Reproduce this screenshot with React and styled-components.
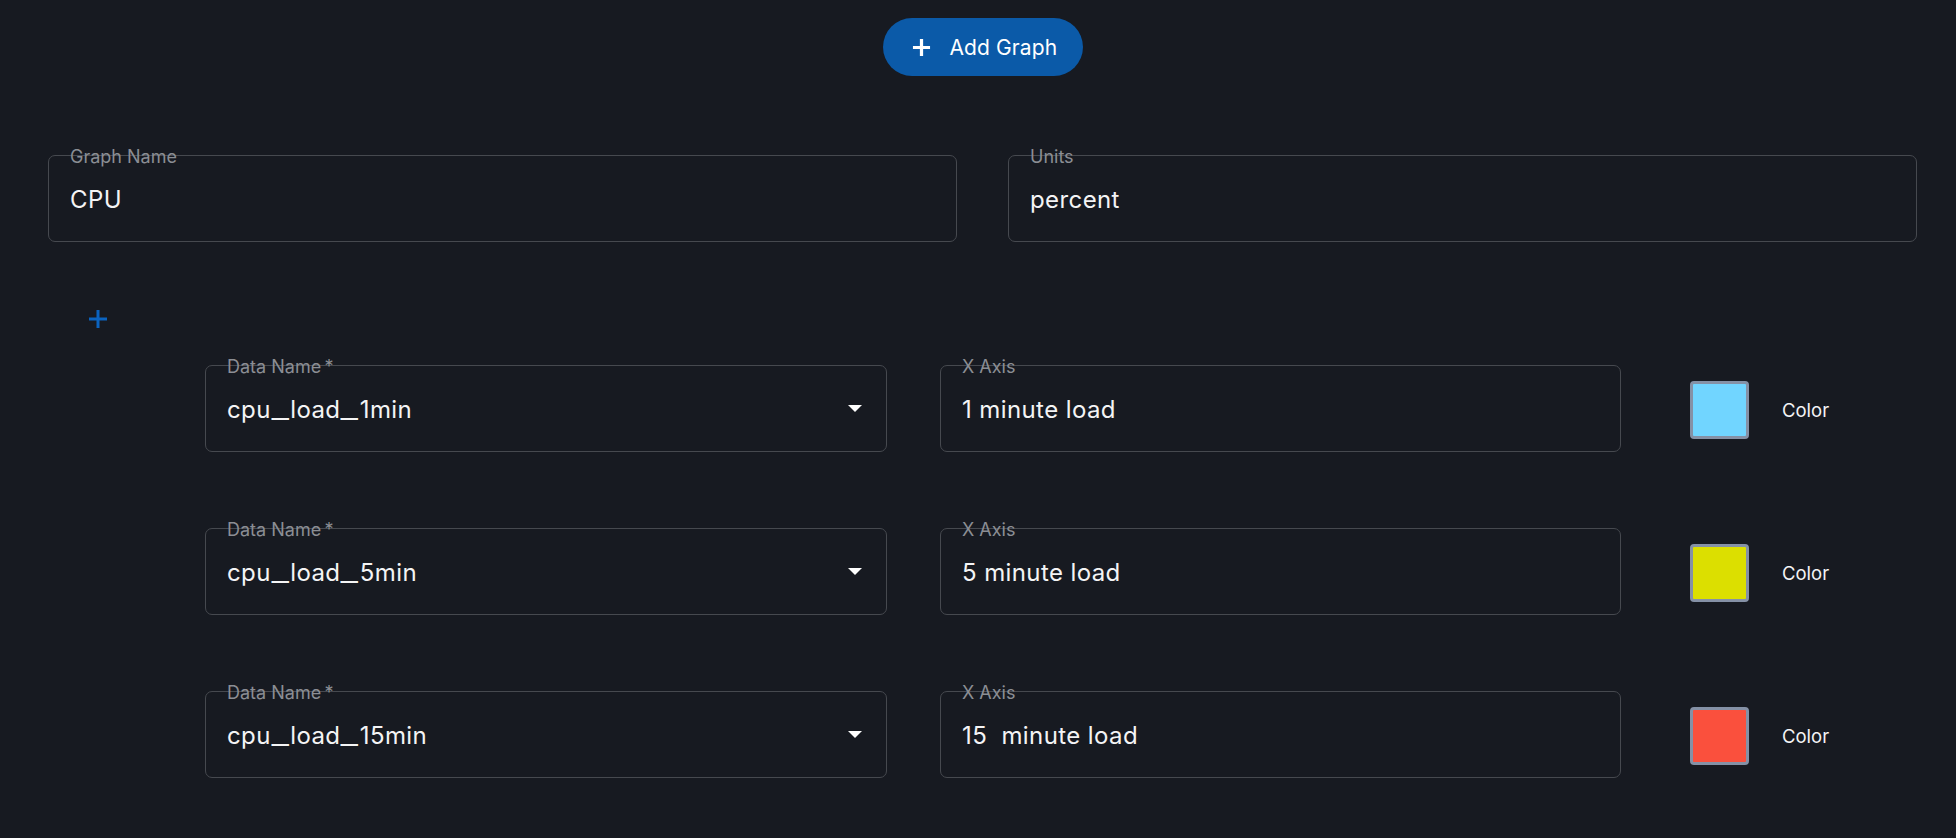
import React from "react";
import styled, { createGlobalStyle } from "styled-components";

const Global = createGlobalStyle`
  html, body { margin: 0; padding: 0; background: #171a21; }
  body { font-family: Inter, "Noto Sans", sans-serif; color: #fff; }
`;

const Page = styled.div`
  min-height: 838px;
  padding: 18px 39px 0 48px;
  box-sizing: border-box;
  display: flex;
  flex-direction: column;
`;

const TopBar = styled.div`
  display: flex;
  justify-content: center;
`;

const AddButton = styled.button`
  height: 58px;
  width: 200px;
  border: none;
  border-radius: 29px;
  background: #0b5aa8;
  color: #fff;
  font-family: Inter, sans-serif;
  font-size: 21px;
  font-weight: 400;
  letter-spacing: 0.1px;
  display: flex;
  align-items: center;
  justify-content: flex-start;
  gap: 19px;
  padding: 0 0 0 29px;
  cursor: pointer;
`;

const FieldsRow = styled.div`
  margin-top: 79px;
  display: grid;
  grid-template-columns: 1fr 1fr;
  gap: 51px;
`;

const Field = styled.div`
  position: relative;
  height: 87px;
  width: ${(p) => (p.$width ? `${p.$width}px` : "auto")};
  box-sizing: border-box;
  border: 1px solid #46494f;
  border-radius: 7px;
  display: flex;
  align-items: center;
  padding: 0 24px 0 21px;
  flex-shrink: 0;
`;

const Label = styled.span`
  position: absolute;
  left: 21px;
  top: -8px;
  font-size: 18px;
  line-height: 18px;
  color: #8b8e94;
`;

const Value = styled.span`
  flex: 1;
  font-size: 24px;
  letter-spacing: 0.4px;
  color: #f4f4f5;
  white-space: pre;
  padding-top: 2px;
`;

const Underscore = styled.span`
  display: inline-block;
  transform: scaleX(1.6);
  margin: 0 4px;
`;

const PlusRow = styled.div`
  margin-top: 67px;
  padding-left: 40px;
  height: 20px;
  display: flex;
  align-items: center;
`;

const IconButton = styled.button`
  background: none;
  border: none;
  padding: 0;
  width: 20px;
  height: 20px;
  display: flex;
  cursor: pointer;
`;

const Rows = styled.div`
  margin-top: 36px;
  padding-left: 157px;
  display: flex;
  flex-direction: column;
  gap: 76px;
`;

const Row = styled.div`
  display: flex;
  align-items: center;
`;

const Gap = styled.div`
  width: ${(p) => p.$w}px;
  flex-shrink: 0;
`;

const Swatch = styled.div`
  width: 59px;
  height: 58px;
  box-sizing: border-box;
  border: 3px solid #8591a6;
  border-radius: 4px;
  background: ${(p) => p.$color};
  margin-top: 3px;
  flex-shrink: 0;
`;

const ColorText = styled.span`
  font-size: 18.5px;
  color: #f4f4f5;
  margin-left: 33px;
  padding-top: 3px;
`;

const Plus = ({ size, color, stroke }) => (
  <svg width={size} height={size} viewBox="0 0 20 20">
    <path d="M10 1v18M1 10h18" stroke={color} strokeWidth={stroke} fill="none" />
  </svg>
);

const Arrow = () => (
  <svg width="14" height="7" viewBox="0 0 14 7">
    <polygon points="0,0 14,0 7,7" fill="#fff" />
  </svg>
);

const withUnderscores = (text) =>
  text.split("_").flatMap((part, i) =>
    i === 0 ? [part] : [<Underscore key={i}>_</Underscore>, part]
  );

const rows = [
  { name: "cpu_load_1min", axis: "1 minute load", color: "#71d5ff" },
  { name: "cpu_load_5min", axis: "5 minute load", color: "#dcdf00" },
  { name: "cpu_load_15min", axis: "15  minute load", color: "#fa503d" },
];

export default function App() {
  return (
    <>
      <Global />
      <Page>
        <TopBar>
          <AddButton>
            <Plus size={19} color="#fff" stroke={3.4} />
            Add Graph
          </AddButton>
        </TopBar>
        <FieldsRow>
          <Field>
            <Label>Graph Name</Label>
            <Value>CPU</Value>
          </Field>
          <Field>
            <Label>Units</Label>
            <Value>percent</Value>
          </Field>
        </FieldsRow>
        <PlusRow>
          <IconButton>
            <Plus size={20} color="#0b63bf" stroke={3} />
          </IconButton>
        </PlusRow>
        <Rows>
          {rows.map((r) => (
            <Row key={r.name}>
              <Field $width={682}>
                <Label>Data Name&thinsp;*</Label>
                <Value>{withUnderscores(r.name)}</Value>
                <Arrow />
              </Field>
              <Gap $w={53} />
              <Field $width={681}>
                <Label>X Axis</Label>
                <Value>{r.axis}</Value>
              </Field>
              <Gap $w={69} />
              <Swatch $color={r.color} />
              <ColorText>Color</ColorText>
            </Row>
          ))}
        </Rows>
      </Page>
    </>
  );
}
